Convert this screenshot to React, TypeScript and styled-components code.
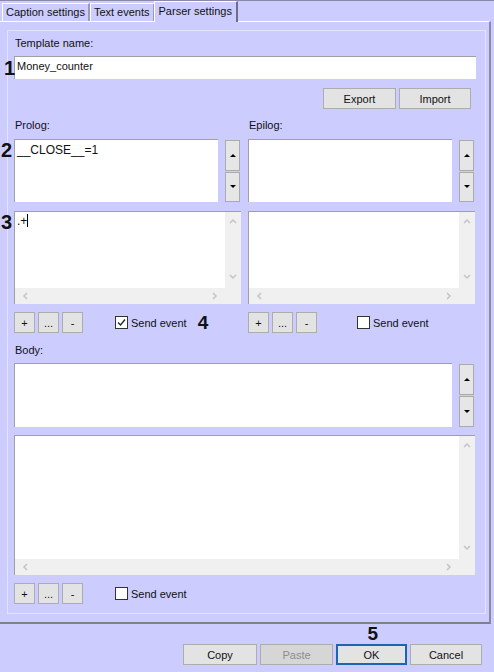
import React from 'react'
import styled, { createGlobalStyle } from 'styled-components'

const Global = createGlobalStyle`
  html, body { margin: 0; padding: 0; background: #ccccff; }
  body { font-family: "Liberation Sans", Arial, sans-serif; font-size: 11px; color: #111; }
`

const Window = styled.div`
  width: 494px;
  height: 672px;
  background: #ccccff;
  display: flex;
  flex-direction: column;
  overflow: hidden;
`

const TabBar = styled.div`
  height: 21px;
  display: flex;
  align-items: flex-end;
  padding-left: 2px;
  box-shadow: inset 0 1px 0 #8a8aa8;
`

const Tab = styled.div<{ $active?: boolean }>`
  height: ${p => (p.$active ? 21 : 18)}px;
  box-sizing: border-box;
  padding: ${p => (p.$active ? '3px 4px 0 4px' : '2px 3px 0 3px')};
  margin-left: ${p => (p.$active ? -1 : 0)}px;
  border-top: 1px solid #fff;
  border-left: 1px solid #fff;
  border-right: 2px solid ${p => (p.$active ? '#6e6e8a' : '#9a9ab8')};
  background: #ccccff;
  white-space: nowrap;
  position: relative;
  z-index: ${p => (p.$active ? 2 : 1)};
  margin-bottom: ${p => (p.$active ? -1 : 0)}px;
`

const TabPage = styled.div`
  height: 603px;
  box-sizing: border-box;
  width: 491px;
  border-top: 1px solid #fff;
  border-right: 2px solid #8a8aa0;
  border-bottom: 2px solid #80808a;
  padding: 8px 3px 0 7px;
`

const GroupBox = styled.div`
  height: 584px;
  box-sizing: border-box;
  border: 1px solid #e4e4ff;
  padding: 0 9px 0 6px;
  display: flex;
  flex-direction: column;
`

const Label = styled.div<{ $top: number }>`
  margin-top: ${p => p.$top}px;
  height: 13px;
  line-height: 13px;
  padding-left: 1px;
`

const Field = styled.div<{ $top?: number }>`
  position: relative;
  margin-top: ${p => p.$top ?? 0}px;
`

const Marker = styled.span<{ $left: number; $top?: number }>`
  position: absolute;
  left: ${p => p.$left}px;
  top: ${p => p.$top ?? 0}px;
  font: bold 20px "Liberation Sans", Arial, sans-serif;
  line-height: 20px;
`

const TextInput = styled.div`
  height: 23px;
  width: 462px;
  box-sizing: border-box;
  background: #fff;
  border-top: 1px solid #a0a0a0;
  border-left: 1px solid #a0a0a0;
  padding: 3px 2px;
`

const ButtonRow = styled.div<{ $top: number; $end?: boolean }>`
  display: flex;
  align-items: center;
  justify-content: ${p => (p.$end ? 'flex-end' : 'flex-start')};
  margin-top: ${p => p.$top}px;
  height: 21px;
  gap: 3px;
`

const Button = styled.div<{ $w: number; $disabled?: boolean; $default?: boolean }>`
  width: ${p => p.$w}px;
  height: 21px;
  box-sizing: border-box;
  display: flex;
  align-items: center;
  justify-content: center;
  background: ${p => (p.$disabled ? '#d6d6d6' : '#e3e3e3')};
  border: ${p => (p.$default ? '2px solid #1c64b4' : '1px solid #adadad')};
  color: ${p => (p.$disabled ? '#8d8d8d' : '#111')};
`

const Columns = styled.div<{ $top: number }>`
  display: grid;
  grid-template-columns: 227px 227px;
  column-gap: 7px;
  margin-top: ${p => p.$top}px;
`

const Column = styled.div`
  display: flex;
  flex-direction: column;
`

const SpinRow = styled.div<{ $top?: number }>`
  display: flex;
  gap: 7px;
  margin-top: ${p => p.$top ?? 0}px;
`

const SpinBox = styled.div<{ $w: number; $h: number }>`
  width: ${p => p.$w}px;
  height: ${p => p.$h}px;
  box-sizing: border-box;
  background: #fff;
  border-top: 1px solid #a0a0a0;
  border-left: 1px solid #a0a0a0;
  padding: 3px 2px;
  font-size: 12px;
`

const Spin = styled.div`
  width: 15px;
  display: flex;
  flex-direction: column;
  gap: 1px;
  padding-top: 1px;
`

const SpinButton = styled.div`
  flex: 1;
  background: #e6e6e6;
  border: 1px solid #ababab;
  display: flex;
  align-items: center;
  justify-content: center;
`

const Arrow = styled.div<{ $up?: boolean }>`
  width: 0;
  height: 0;
  border-left: 3px solid transparent;
  border-right: 3px solid transparent;
  ${p => (p.$up ? 'border-bottom: 3px solid #000;' : 'border-top: 3px solid #000;')}
`

const Memo = styled.div<{ $w: number; $h: number; $top?: number }>`
  width: ${p => p.$w}px;
  height: ${p => p.$h}px;
  margin-top: ${p => p.$top ?? 0}px;
  box-sizing: border-box;
  border-top: 1px solid #a0a0a0;
  border-left: 1px solid #a0a0a0;
  display: grid;
  grid-template-columns: 1fr 16px;
  grid-template-rows: 1fr 16px;
  background: #f0f0f0;
`

const MemoText = styled.div`
  background: #fff;
  padding: 2px 2px;
  font-size: 12px;
`

const VScroll = styled.div`
  display: flex;
  flex-direction: column;
  justify-content: space-between;
  align-items: center;
  padding: 6px 0 7px;
`

const HScroll = styled.div`
  display: flex;
  justify-content: space-between;
  align-items: center;
  padding: 0 6px 0 7px;
`

const Caret = styled.span`
  display: inline-block;
  width: 1px;
  height: 13px;
  background: #000;
  vertical-align: -2px;
`

const CheckRow = styled.div<{ $gap: number }>`
  display: flex;
  align-items: center;
  height: 21px;
  margin-left: ${p => p.$gap}px;
  gap: 3px;
`

const Check = styled.div`
  width: 13px;
  height: 13px;
  box-sizing: border-box;
  background: #fff;
  border: 1px solid #333;
  display: flex;
  align-items: center;
  justify-content: center;
`

const Num = styled.span`
  font: bold 19px "Liberation Sans", Arial, sans-serif;
  line-height: 19px;
  height: 19px;
  margin-left: 8px;
`

const Footer = styled.div`
  display: flex;
  flex-direction: column;
  align-items: flex-end;
  padding-right: 12px;
`

const FooterNum = styled.div`
  font: bold 19px "Liberation Sans", Arial, sans-serif;
  height: 19px;
  line-height: 19px;
  margin-right: 104px;
`

const Chevron = ({ dir }: { dir: 'up' | 'down' | 'left' | 'right' }) => {
  const d = {
    up: 'M1 5 L4 2 L7 5',
    down: 'M1 2 L4 5 L7 2',
    left: 'M5 1 L2 4 L5 7',
    right: 'M2 1 L5 4 L2 7',
  }[dir]
  return (
    <svg width="8" height="8" viewBox="0 0 8 8">
      <path d={d} fill="none" stroke="#c4c4c4" strokeWidth="1.5" />
    </svg>
  )
}

const Spinner = () => (
  <Spin>
    <SpinButton><Arrow $up /></SpinButton>
    <SpinButton><Arrow /></SpinButton>
  </Spin>
)

const ScrollMemo = ({ w, h, top, children }: { w: number; h: number; top?: number; children?: React.ReactNode }) => (
  <Memo $w={w} $h={h} $top={top}>
    <MemoText>{children}</MemoText>
    <VScroll><Chevron dir="up" /><Chevron dir="down" /></VScroll>
    <HScroll><Chevron dir="left" /><Chevron dir="right" /></HScroll>
    <div />
  </Memo>
)

const Actions = ({ gap, checked, num }: { gap: number; checked?: boolean; num?: string }) => (
  <ButtonRow $top={8}>
    <Button $w={21}>+</Button>
    <Button $w={21}>...</Button>
    <Button $w={21}>-</Button>
    <CheckRow $gap={gap}>
      <Check>
        {checked && (
          <svg width="9" height="9" viewBox="0 0 9 9">
            <path d="M1 4.5 L3.5 7 L8 1.5" fill="none" stroke="#222" strokeWidth="1.3" />
          </svg>
        )}
      </Check>
      <span>Send event</span>
      {num && <Num>{num}</Num>}
    </CheckRow>
  </ButtonRow>
)

export default function App() {
  return (
    <Window>
      <Global />
      <TabBar>
        <Tab>Caption settings</Tab>
        <Tab>Text events</Tab>
        <Tab $active>Parser settings</Tab>
      </TabBar>
      <TabPage>
        <GroupBox>
          <Label $top={6}>Template name:</Label>
          <Field $top={6}>
            <Marker $left={-10} $top={2}>1</Marker>
            <TextInput>Money_counter</TextInput>
          </Field>
          <ButtonRow $top={9} $end>
            <Button $w={73}>Export</Button>
            <Button $w={72}>Import</Button>
            <div style={{ width: 2 }} />
          </ButtonRow>
          <Columns $top={10}>
            <Column>
              <Label $top={0}>Prolog:</Label>
              <Field $top={7}>
                <Marker $left={-13} $top={1}>2</Marker>
                <SpinRow>
                  <SpinBox $w={204} $h={63}>__CLOSE__=1</SpinBox>
                  <Spinner />
                </SpinRow>
              </Field>
              <Field $top={9}>
                <Marker $left={-13} $top={1}>3</Marker>
                <ScrollMemo w={227} h={93}>.+<Caret /></ScrollMemo>
              </Field>
              <Actions gap={29} checked num="4" />
            </Column>
            <Column>
              <Label $top={0}>Epilog:</Label>
              <SpinRow $top={7}>
                <SpinBox $w={204} $h={63} />
                <Spinner />
              </SpinRow>
              <ScrollMemo w={227} h={93} top={9} />
              <Actions gap={37} />
            </Column>
          </Columns>
          <Label $top={11}>Body:</Label>
          <SpinRow $top={6}>
            <SpinBox $w={438} $h={64} />
            <Spinner />
          </SpinRow>
          <ScrollMemo w={461} h={140} top={8} />
          <Actions gap={29} />
        </GroupBox>
      </TabPage>
      <Footer>
        <FooterNum>5</FooterNum>
        <ButtonRow $top={1}>
          <Button $w={74}>Copy</Button>
          <Button $w={73} $disabled>Paste</Button>
          <Button $w={71} $default>OK</Button>
          <Button $w={72}>Cancel</Button>
        </ButtonRow>
      </Footer>
    </Window>
  )
}
